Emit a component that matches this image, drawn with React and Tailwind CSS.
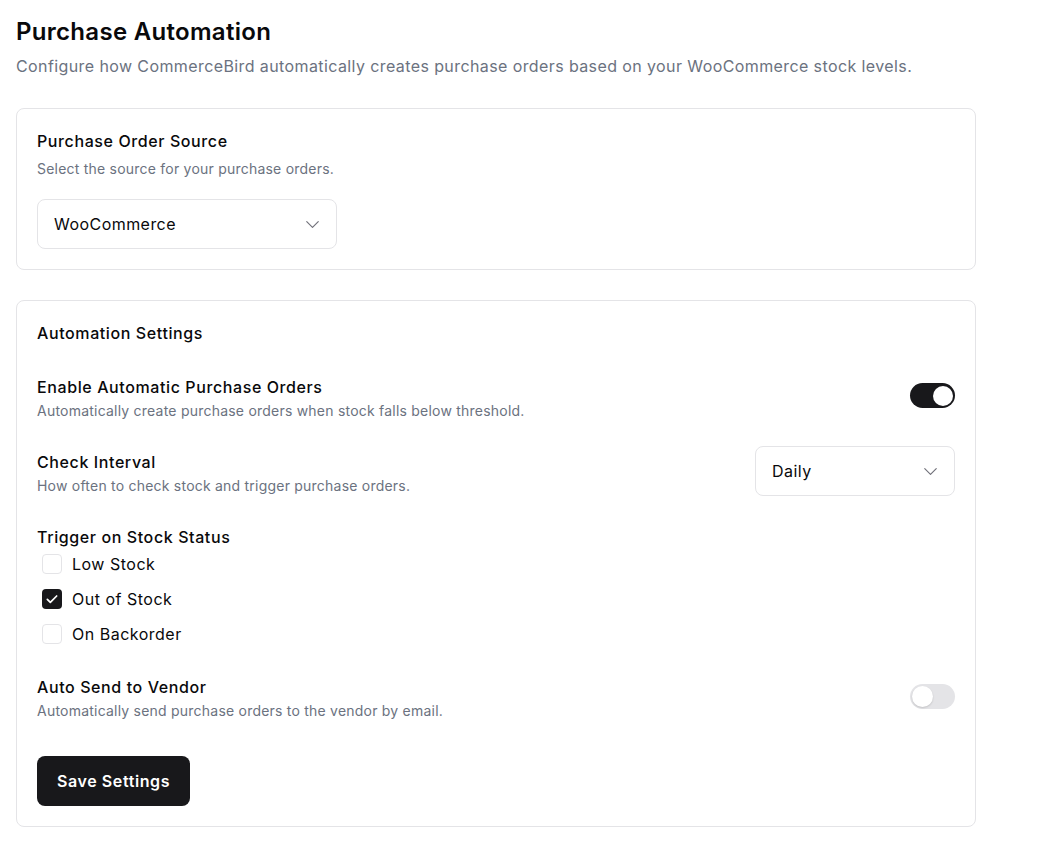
import React from "react";

function Chevron() {
  return (
    <svg width="23" height="23" viewBox="0 0 24 24" fill="none" stroke="#71717a" strokeWidth="1.2" strokeLinecap="round" strokeLinejoin="round">
      <path d="M6 9l6 6 6-6" />
    </svg>
  );
}

function Select({ value, className }) {
  return (
    <div className={"flex h-[50px] items-center justify-between rounded-lg border border-[#e4e4e7] bg-white pl-4 pr-3 " + className}>
      <span className="text-base tracking-[0.45px] text-[#09090b]">{value}</span>
      <Chevron />
    </div>
  );
}

function Toggle({ on }) {
  return on ? (
    <div className="mb-[5px] flex h-[25px] w-[45px] items-center justify-end rounded-full bg-[#18181b] px-[2.5px]">
      <div className="h-[20px] w-[20px] rounded-full bg-white" />
    </div>
  ) : (
    <div className="mb-[3px] flex h-[25px] w-[45px] items-center justify-start rounded-full bg-[#e4e4e7] px-[2px]">
      <div className="h-[21px] w-[21px] rounded-full bg-white shadow-[0_1px_2px_rgba(0,0,0,0.15)]" />
    </div>
  );
}

function Checkbox({ checked, label }) {
  return (
    <div className="flex h-6 items-center">
      <div className="ml-[5px] flex h-5 w-5 items-center justify-center">
        {checked ? (
          <div className="flex h-5 w-5 items-center justify-center rounded-[4px] bg-[#18181b]">
            <svg width="16" height="16" viewBox="0 0 24 24" fill="none" stroke="white" strokeWidth="2.6" strokeLinecap="round" strokeLinejoin="round">
              <path d="M5 12.5l4.5 4.5L19 7.5" />
            </svg>
          </div>
        ) : (
          <div className="h-5 w-5 rounded-[4px] border border-[#e4e4e7] bg-white" />
        )}
      </div>
      <span className="ml-[10px] text-base tracking-[0.5px] text-[#09090b]">{label}</span>
    </div>
  );
}

const T = "text-base font-medium leading-6 tracking-[0.6px]";
const D = "text-sm leading-5 tracking-[0.22px] text-[#6b7280]";

export default function App() {
  return (
    <div className="min-h-screen bg-white p-4 font-['Inter',sans-serif] text-[#09090b]">
      <h1 className="text-2xl font-semibold leading-8 tracking-[0.3px]">Purchase Automation</h1>
      <p className="mt-1.5 text-base leading-6 tracking-[0.4px] text-[#6b7280]">
        Configure how CommerceBird automatically creates purchase orders based on your WooCommerce stock levels.
      </p>

      <div className="mt-[30px] w-[960px] rounded-lg border border-[#e4e4e7] bg-white p-5">
        <div className={T}>Purchase Order Source</div>
        <div className={"mt-1.5 " + D}>Select the source for your purchase orders.</div>
        <Select value="WooCommerce" className="mt-5 w-[300px]" />
      </div>

      <div className="mt-[30px] w-[960px] rounded-lg border border-[#e4e4e7] bg-white p-5">
        <div className={T}>Automation Settings</div>

        <div className="mt-[30px] flex items-center justify-between">
          <div>
            <div className={T}>Enable Automatic Purchase Orders</div>
            <div className={"mt-0.5 " + D}>Automatically create purchase orders when stock falls below threshold.</div>
          </div>
          <Toggle on />
        </div>

        <div className="mt-[25px] flex items-center justify-between">
          <div className="pt-1">
            <div className={T}>Check Interval</div>
            <div className={"mt-0.5 " + D}>How often to check stock and trigger purchase orders.</div>
          </div>
          <Select value="Daily" className="w-[200px]" />
        </div>

        <div className="mt-[29px]">
          <div className={T}>Trigger on Stock Status</div>
          <div className="mt-[3px] flex flex-col gap-[11px]">
            <Checkbox label="Low Stock" />
            <Checkbox label="Out of Stock" checked />
            <Checkbox label="On Backorder" />
          </div>
        </div>

        <div className="mt-[29px] flex items-center justify-between">
          <div>
            <div className={T}>Auto Send to Vendor</div>
            <div className={"mt-0.5 " + D}>Automatically send purchase orders to the vendor by email.</div>
          </div>
          <Toggle on={false} />
        </div>

        <button className="mt-[35px] flex h-[50px] w-[153px] items-center justify-center rounded-lg bg-[#18181b] text-base font-semibold tracking-[0.6px] text-white">
          Save Settings
        </button>
      </div>
    </div>
  );
}
